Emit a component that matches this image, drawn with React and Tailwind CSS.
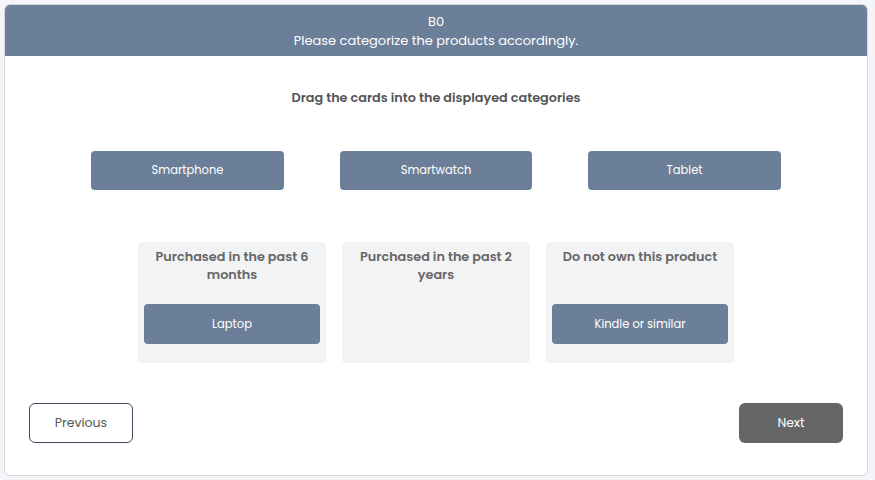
export default function App() {
  const font = { fontFamily: '"Poppins", "Inter", "Noto Sans", sans-serif' };
  const Card = ({ label, className = "" }) => (
    <div className={`flex items-center justify-center rounded-[4px] bg-[#6b7f99] pt-[1px] text-[11.5px] text-white ${className}`}>
      {label}
    </div>
  );
  const Cat = ({ title, children }) => (
    <div className="flex h-[121px] w-[188px] flex-col rounded-[4px] bg-[#f2f3f5] px-[6px] pt-[6px]">
      <div className="h-[56px] text-center text-[12.8px] font-semibold leading-[18px] text-[#666]">{title}</div>
      {children}
    </div>
  );
  return (
    <div className="h-[480px] w-[875px] bg-[#f4f5f9] pt-[4px] pl-[4px] pr-[7px] pb-[4px]" style={font}>
      <div className="flex h-[472px] flex-col overflow-hidden rounded-[6px] border border-[#d4d6da] bg-white">
        <div className="flex h-[51px] shrink-0 flex-col items-center justify-center bg-[#6b7f99] text-[13px] leading-[19px] text-white">
          <div>B0</div>
          <div>Please categorize the products accordingly.</div>
        </div>
        <div className="mt-[33px] text-center text-[12.8px] font-semibold leading-[18px] text-[#555]">
          Drag the cards into the displayed categories
        </div>
        <div className="mt-[44px] flex justify-center gap-[56px]">
          <Card label="Smartphone" className="h-[39px] w-[193px]" />
          <Card label="Smartwatch" className="h-[39px] w-[192px]" />
          <Card label="Tablet" className="h-[39px] w-[193px]" />
        </div>
        <div className="mt-[52px] flex justify-center gap-[16px]">
          <Cat title="Purchased in the past 6 months">
            <Card label="Laptop" className="h-[40px] w-full" />
          </Cat>
          <Cat title="Purchased in the past 2 years" />
          <Cat title="Do not own this product">
            <Card label="Kindle or similar" className="h-[40px] w-full" />
          </Cat>
        </div>
        <div className="mt-[40px] flex justify-between px-[24px]">
          <button className="flex h-[40px] w-[104px] items-center justify-center rounded-[6px] border border-[#3f4b5c] bg-white text-[12.5px] text-[#555]">
            Previous
          </button>
          <button className="flex h-[40px] w-[104px] items-center justify-center rounded-[6px] bg-[#666666] text-[12.5px] text-white">
            Next
          </button>
        </div>
      </div>
    </div>
  );
}
